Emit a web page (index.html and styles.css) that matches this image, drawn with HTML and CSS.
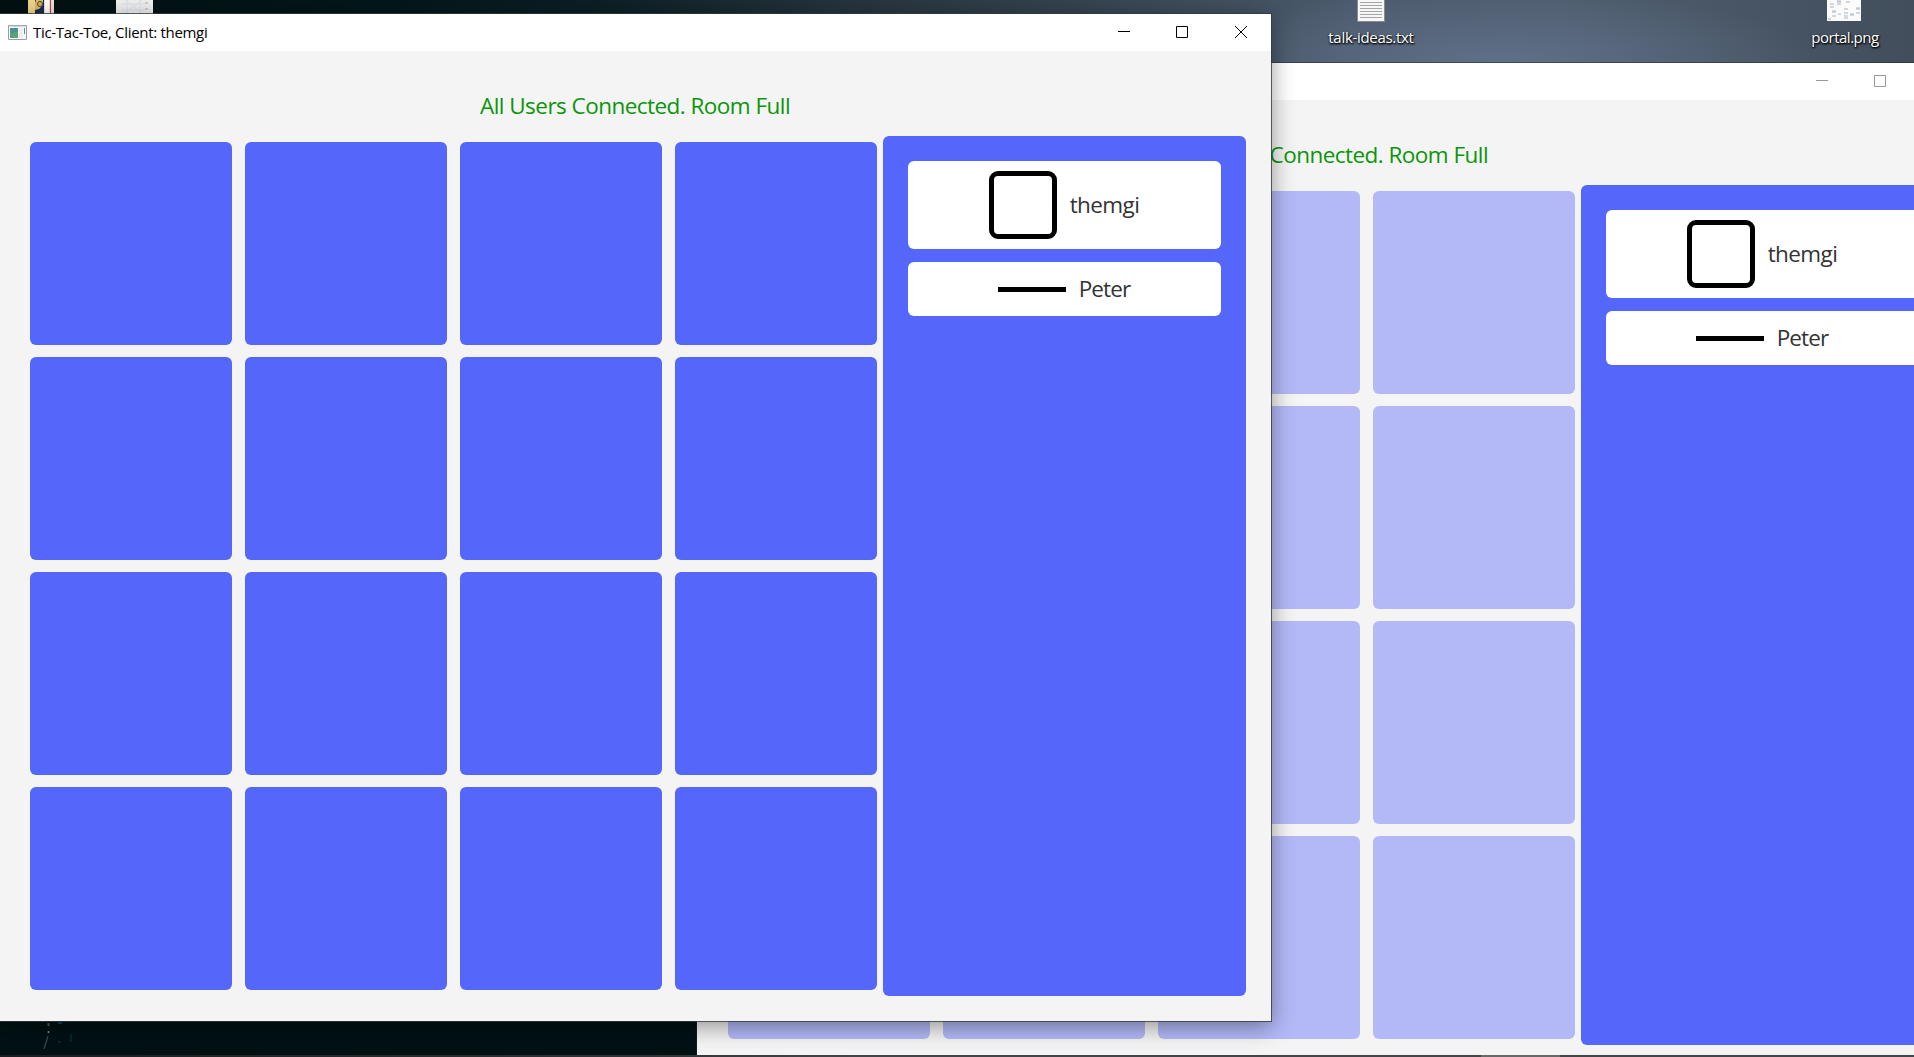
FILE: index.html
```html
<!DOCTYPE html>
<html lang="en">
<head>
<meta charset="utf-8">
<title>Tic-Tac-Toe</title>
<link rel="stylesheet" href="styles.css">
</head>
<body>
<main class="desktop">
  <svg class="shortcut shortcut-folder" width="28" height="14" viewBox="0 0 28 14">
    <path d="M1 0h26v14H1z" fill="#e8e4dc"/><path d="M1 0h9v14H1z" fill="#f0d48a"/><path d="M8 0h9v14H8z" fill="#1d2c4c"/>
    <path d="M9 0h7v5l-4 4-4 1V3z" fill="#d9b866"/><circle cx="13" cy="4" r="2.500" fill="none" stroke="#4a4436"/><path d="M20 0v14" stroke="#fff" stroke-width="4"/><path d="M23.500 0v14" stroke="#d63a34"/>
  </svg>
  <svg class="shortcut shortcut-sheet" width="37" height="14" viewBox="0 0 37 14">
    <path d="M0 0h37v14H0z" fill="#f1f1f2"/><path d="M5 4h24M5 10h24M11 0v14M24 0v14M8 14L26 0M9 0l18 14" stroke="#dde2ea" fill="none"/><path d="M29 3h3M29 9h3" stroke="#aaa"/>
  </svg>
  <figure class="shortcut file file-text">
    <svg width="28" height="22" viewBox="0 0 28 22"><path d="M.5-2h27v23.500H.5z" fill="#f7f7f7" stroke="#8b8b8b"/><path d="M3 2.500h22M3 5.500h22M3 8.500h22M3 11.500h22M3 14.500h22M3 17.500h22" stroke="#a2a4a6"/></svg>
    <figcaption class="label label-text">talk-ideas.txt</figcaption>
  </figure>
  <figure class="shortcut file file-image">
    <svg width="34" height="22" viewBox="0 0 34 22"><path d="M0 0h34v21H0z" fill="#fbfbfb"/><path d="M3 4h4M3 7h4M10 1h4M10 4h4M19 2h4M5 12h4M5 16h4M11 14h3M17 9h4M17 13h4M17 18h4M23 15h4M29 9h4M29 13h4M1 19h3" stroke="#d3d7db" stroke-width="2"/><path d="M10 2h4M5 11h4M29 8h4M17 16h4M23 14h4" stroke="#9ebdd8"/></svg>
    <figcaption class="label label-image">portal.png</figcaption>
  </figure>
  <svg class="shortcut glints" width="50" height="33" viewBox="0 0 50 33"><path d="M9 27l4-13" stroke="#3c4c52" stroke-width="1.200"/><circle cx="13.500" cy="10" r="1" fill="#8a9898"/><path d="M13.500 1v3" stroke="#49636e" stroke-width="2"/><path d="M23 1h4" stroke="#0d3f58" stroke-width="2"/><path d="M23 20h3M36 12v8" stroke="#08252d" stroke-width="2"/></svg>

  <section class="window window-back">
    <header class="titlebar">
      <svg class="controls" width="142" height="37" viewBox="0 0 142 37" fill="none" stroke="#999"><path d="M0 17.500h12M58.500 12.500h11v11h-11zM117 12l12 12M129 12l-12 12"/></svg>
    </header>
    <p class="status">All Users Connected. Room Full</p>
    <div class="game">
      <div class="board"><i class="tile"></i><i class="tile"></i><i class="tile"></i><i class="tile"></i><i class="tile"></i><i class="tile"></i><i class="tile"></i><i class="tile"></i><i class="tile"></i><i class="tile"></i><i class="tile"></i><i class="tile"></i><i class="tile"></i><i class="tile"></i><i class="tile"></i><i class="tile"></i></div>
      <aside class="players">
        <div class="player player-square"><span class="square"></span><span class="name name-one">themgi</span></div>
        <div class="player player-line"><span class="line"></span><span class="name name-two">Peter</span></div>
      </aside>
    </div>
  </section>

  <section class="window window-front">
    <header class="titlebar">
      <svg class="app-icon" width="19" height="16" viewBox="0 0 19 16"><path d="M.5.5h18v14H.5z" fill="#fafafa" stroke="#9a9ea4"/><path d="M1 1h17" stroke="#aab6c2"/><path d="M2 3h8v10H2z" fill="#4f8f96"/><path d="M2 9l8-3v7H2z" fill="#55a377"/><path d="M11 3h4v10h-4z" fill="#eee"/><path d="M16.500 3v6" stroke="#4a9d8c"/></svg>
      <h1 class="title">Tic-Tac-Toe, Client: themgi</h1>
      <svg class="controls" width="142" height="37" viewBox="0 0 142 37" fill="none" stroke="#000"><path d="M0 17.500h12M58.500 12.500h11v11h-11zM117 12l12 12M129 12l-12 12"/></svg>
    </header>
    <p class="status">All Users Connected. Room Full</p>
    <div class="game">
      <div class="board"><i class="tile"></i><i class="tile"></i><i class="tile"></i><i class="tile"></i><i class="tile"></i><i class="tile"></i><i class="tile"></i><i class="tile"></i><i class="tile"></i><i class="tile"></i><i class="tile"></i><i class="tile"></i><i class="tile"></i><i class="tile"></i><i class="tile"></i><i class="tile"></i></div>
      <aside class="players">
        <div class="player player-square"><span class="square"></span><span class="name name-one">themgi</span></div>
        <div class="player player-line"><span class="line"></span><span class="name name-two">Peter</span></div>
      </aside>
    </div>
  </section>
  <div class="taskbar"></div>
</main>
</body>
</html>
```
FILE: styles.css
```css
* { box-sizing: border-box; }
body { margin: 0; overflow: hidden; font-family: "Open Sans", "Noto Sans", sans-serif; }
.desktop {
  position: relative; width: 1914px; height: 1057px; overflow: hidden;
  background:
    radial-gradient(ellipse 320px 70px at 1500px 60px, #5f6f87 0%, rgba(95,111,135,0) 100%) no-repeat 0 0 / 100% 64px,
    linear-gradient(90deg, #021012 0, #03171a 400px, #0b2024 600px, #26343d 850px, #364450 1080px, #4b5a6c 1350px, #4e5d6e 1560px, #424e5c 1914px) no-repeat 0 0 / 100% 64px,
    #011114;
}
.shortcut { position: absolute; }
.shortcut-folder { left: 27px; top: 0; }
.shortcut-sheet { left: 116px; top: 0; }
.glints { left: 35px; top: 1022px; }
.file { margin: 0; top: 0; display: flex; flex-direction: column; align-items: center; width: 120px; }
.file-text { left: 1311px; }
.file-image { left: 1784px; }
.label { margin-top: 4px; color: #fff; font-size: 15px; line-height: 22px; white-space: nowrap; text-shadow: 1px 1px 2px #000, 0 1px 2px #000; }
.label-text { letter-spacing: -.3px; }
.label-image { margin-left: 2px; letter-spacing: -.5px; }

.window { position: absolute; width: 1272px; height: 1007px; background: #f4f4f4; }
.window-front { left: -1px; top: 14px; box-shadow: 0 0 0 1px rgba(50,60,60,.8), 0 5px 22px rgba(0,0,0,.42); }
.window-back { left: 697px; top: 63px; box-shadow: 0 0 0 1px rgba(30,40,45,.5); }
.titlebar { display: flex; align-items: center; height: 37px; padding-left: 9px; background: #fff; }
.app-icon { flex: none; }
.title { margin: 0 0 0 6px; font-size: 15px; font-weight: 400; letter-spacing: -.31px; line-height: 37px; color: #000; white-space: nowrap; }
.controls { flex: none; margin-left: auto; width: 153px; padding-right: 11px; }
.status { margin: 38px 0 0; height: 34px; line-height: 34px; text-align: center; font-size: 22.5px; letter-spacing: -.54px; color: #0a960a; white-space: nowrap; }
.game { display: flex; align-items: flex-start; gap: 6px; margin-top: 13px; padding-left: 31px; }
.board { display: grid; grid-template: repeat(4, 203px) / repeat(4, 202px); gap: 12px 13px; margin-top: 6px; }
.tile { border-radius: 6px; background: #5566fa; }
.window-back .tile { background: #b3b9f7; }
.players { display: flex; flex-direction: column; gap: 13px; width: 363px; height: 860px; padding: 25px; border-radius: 6px; background: #5566fa; }
.player { display: flex; align-items: center; justify-content: center; gap: 13px; border-radius: 6px; background: #fff; }
.player-square { height: 88px; padding-right: 1px; }
.player-line { height: 54px; padding-right: 1px; }
.square { width: 68px; height: 68px; border: 5px solid #000; border-radius: 9px; }
.line { width: 68px; height: 5px; background: #000; }
.name { font-size: 22.500px; line-height: 34px; letter-spacing: -.6px; color: #333; }
.name-two { letter-spacing: -.9px; }
.taskbar { position: absolute; left: 0; top: 1055px; width: 100%; height: 2px; background: linear-gradient(90deg, transparent 1481px, #686868 1481px, #686868 1560px, transparent 1560px), linear-gradient(90deg, #1c1f20, #303436 650px, #434548 850px); }
```
